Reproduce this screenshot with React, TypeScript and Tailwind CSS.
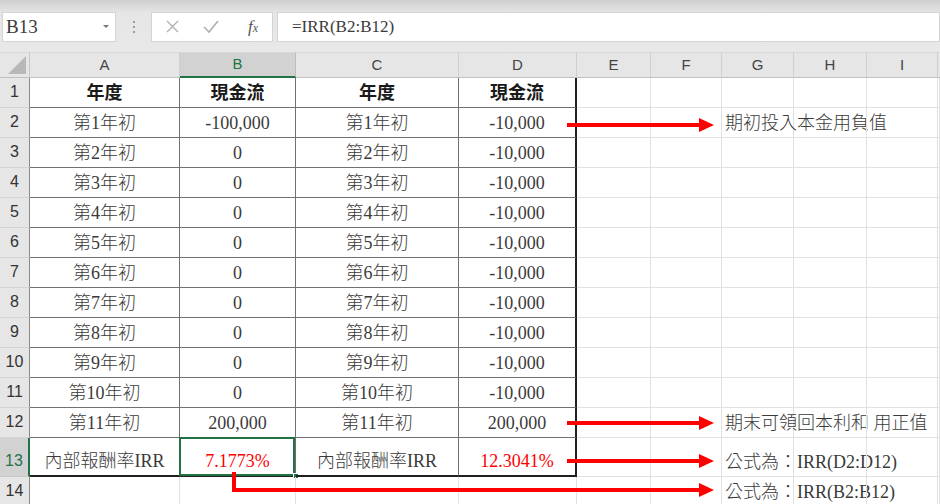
import React from 'react';

const COLS = ['A', 'B', 'C', 'D', 'E', 'F', 'G', 'H', 'I'];

const years = Array.from({ length: 11 }, (_, i) => `第${i + 1}年初`);
const cashB = ['-100,000', '0', '0', '0', '0', '0', '0', '0', '0', '0', '200,000'];
const cashD = [...Array(10).fill('-10,000'), '200,000'];

const notes: Record<number, string> = {
  2: '期初投入本金用負值',
  12: '期末可領回本利和 用正值',
  13: '公式為：IRR(D2:D12)',
  14: '公式為：IRR(B2:B12)',
};

const serif = "font-['Liberation_Serif','Noto_Sans_CJK_TC',serif]";
const sans = "font-['Liberation_Sans','Open_Sans',sans-serif]";

function cellText(r: number, c: number): { text: string; red?: boolean; bold?: boolean } {
  if (r === 1 && c <= 3) return { text: c % 2 === 0 ? '年度' : '現金流', bold: true };
  if (r >= 2 && r <= 12) {
    if (c === 0 || c === 2) return { text: years[r - 2] };
    if (c === 1) return { text: cashB[r - 2] };
    if (c === 3) return { text: cashD[r - 2] };
  }
  if (r === 13) {
    if (c === 0 || c === 2) return { text: '內部報酬率IRR' };
    if (c === 1) return { text: '7.1773%', red: true };
    if (c === 3) return { text: '12.3041%', red: true };
  }
  return { text: '' };
}

function Arrow({ y }: { y: number }) {
  return (
    <>
      <line x1={567} y1={y} x2={701} y2={y} stroke="#ff0000" strokeWidth={4} />
      <polygon points={`699,${y - 7} 714,${y} 699,${y + 7}`} fill="#ff0000" />
    </>
  );
}

export default function App() {
  const rows = Array.from({ length: 14 }, (_, i) => i + 1);

  return (
    <div className={`relative w-[940px] h-[504px] overflow-hidden bg-white ${sans}`}>
      {/* Formula bar */}
      <div className="h-[52px] bg-gradient-to-b from-[#cfcfcf] via-[#e6e6e6] via-[25%] to-[#e8e8e8] flex items-start pt-[12px] pl-[2px]">
        <div className="w-[114px] h-[30px] bg-white border border-[#d4d4d4] flex items-center justify-between pl-[3px] pr-[6px]">
          <span className={`${serif} text-[19px] text-[#3a3a3a]`}>B13</span>
          <span className="w-0 h-0 border-l-[3px] border-r-[3px] border-t-[3px] border-l-transparent border-r-transparent border-t-[#777] -mt-[2px]" />
        </div>
        <div className="w-[35px] h-[30px] flex flex-col items-center justify-center gap-[3px]">
          <span className="w-[2px] h-[2px] bg-[#9a9a9a]" />
          <span className="w-[2px] h-[2px] bg-[#9a9a9a]" />
          <span className="w-[2px] h-[2px] bg-[#9a9a9a]" />
        </div>
        <div className="w-[122px] h-[30px] bg-white border border-[#d4d4d4] flex items-center">
          <svg width="122" height="30" viewBox="0 0 122 30">
            <path d="M15 9 L26 20 M26 9 L15 20" stroke="#b0b0b0" strokeWidth="1.3" fill="none" />
            <path d="M52 15 L57 20 L66 9" stroke="#b0b0b0" strokeWidth="1.6" fill="none" />
          </svg>
          <span className={`${serif} italic text-[17px] text-[#555] -ml-[26px]`}>
            f<span className="text-[12px]">x</span>
          </span>
        </div>
        <div className="ml-[4px] flex-1 h-[30px] bg-white border border-[#d4d4d4] flex items-center pl-[14px]">
          <span className={`${serif} text-[17px] text-[#3a3a3a]`}>=IRR(B2:B12)</span>
        </div>
      </div>

      {/* Sheet */}
      <div className="grid grid-cols-[30px_150px_116px_163px_118px_74px_71px_72px_73px_71px_1fr] grid-rows-[26px_repeat(12,30px)_39px_30px]">
        {/* header row */}
        <div className="relative bg-[#e6e6e6] border-r border-r-[#c8c8c8] border-b border-b-[#c0c0c0] border-t border-t-[#d8d8d8]">
          <svg className="absolute right-[3px] bottom-[3px]" width="18" height="18" viewBox="0 0 18 18">
            <polygon points="18,0 18,18 0,18" fill="#b8b8b8" />
          </svg>
        </div>
        {COLS.map((c) =>
          c === 'B' ? (
            <div
              key={c}
              className="flex items-center justify-center bg-[#d2d2d2] border-r border-r-[#bdbdbd] border-b-2 border-b-[#217346] border-t border-t-[#d8d8d8] text-[15px] text-[#217346]"
            >
              {c}
            </div>
          ) : (
            <div
              key={c}
              className="flex items-center justify-center bg-[#e6e6e6] border-r border-r-[#d0d0d0] border-b border-b-[#c0c0c0] border-t border-t-[#d8d8d8] text-[15px] text-[#444]"
            >
              {c}
            </div>
          )
        )}
        <div className="bg-[#e6e6e6] border-b border-b-[#c0c0c0] border-t border-t-[#d8d8d8]" />

        {rows.map((r) => (
          <React.Fragment key={r}>
            {r === 13 ? (
              <div className="flex items-end justify-center pb-[3px] bg-[#d2d2d2] border-r-2 border-r-[#217346] border-b border-b-[#c8c8c8] text-[16px] text-[#217346]">
                {r}
              </div>
            ) : (
              <div className="flex items-end justify-center pb-[3px] bg-[#e6e6e6] border-r border-r-[#8a8a8a] border-b border-b-[#d4d4d4] text-[16px] text-[#333]">
                {r}
              </div>
            )}
            {Array.from({ length: 10 }, (_, c) => {
              const inTable = r <= 13 && c <= 3;
              const right = inTable
                ? c === 3
                  ? 'border-r-2 border-r-[#1f1f1f]'
                  : 'border-r border-r-[#707070]'
                : 'border-r border-r-[#e1e1e1]';
              const bottom = inTable
                ? r === 13
                  ? 'border-b-2 border-b-[#1f1f1f]'
                  : 'border-b border-b-[#707070]'
                : 'border-b border-b-[#e1e1e1]';
              const { text, red, bold } = cellText(r, c);
              const note = c === 6 ? notes[r] : undefined;
              const selected = r === 13 && c === 1;
              return (
                <div
                  key={c}
                  className={`relative flex items-end pb-[3px] ${right} ${bottom} ${
                    note ? 'justify-start pl-[3px]' : 'justify-center'
                  }`}
                >
                  {text && (
                    <span
                      className={`${serif} text-[18px] leading-[22px] whitespace-nowrap ${
                        red
                          ? 'text-[#ff0000]'
                          : bold
                          ? 'font-bold text-[#1a1a1a]'
                          : 'font-light text-[#3a3a3a]'
                      }`}
                    >
                      {text}
                    </span>
                  )}
                  {note && (
                    <span className={`${serif} font-light text-[18px] leading-[22px] whitespace-nowrap text-[#3a3a3a]`}>
                      {note}
                    </span>
                  )}
                  {selected && (
                    <>
                      <div className="absolute -left-[1px] -top-[1px] right-0 -bottom-[1px] border-2 border-[#217346]" />
                      <div className="absolute -right-[4px] -bottom-[4px] w-[6px] h-[6px] bg-[#217346] border border-white" />
                    </>
                  )}
                  {r === 1 && c === 1 && <div className="absolute left-0 right-0 -top-[1px] h-[1px] bg-[#217346]" />}
                </div>
              );
            })}
          </React.Fragment>
        ))}
      </div>

      {/* Arrows */}
      <svg className="absolute left-0 top-0 pointer-events-none" width="940" height="504" viewBox="0 0 940 504">
        <Arrow y={125} />
        <Arrow y={423} />
        <Arrow y={461} />
        <path d="M234 472 V490 H701" stroke="#ff0000" strokeWidth={4} fill="none" />
        <polygon points="699,483 714,490 699,497" fill="#ff0000" />
      </svg>
    </div>
  );
}
